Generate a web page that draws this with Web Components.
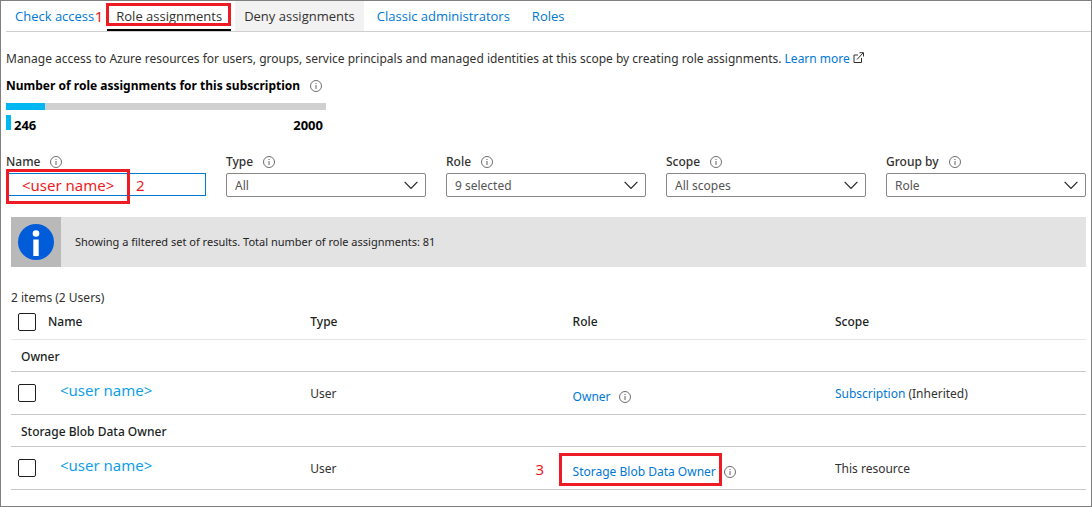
<!DOCTYPE html>
<html lang="en">
<head>
<meta charset="utf-8">
<title>Role assignments</title>
<style>
  html { height: 100%; }
  body {
    margin: 0;
    min-height: 100%;
    display: flex;
    background: #fff;
    color: #323130;
    font: 12px/20px "Noto Sans", "Open Sans", sans-serif;
  }
</style>
</head>
<body>
<access-page></access-page>

<script>
const define = (name, html, setup) => {
  const template = document.createElement('template');
  template.innerHTML = html;
  customElements.define(name, class extends HTMLElement {
    connectedCallback() {
      if (this.shadowRoot) return;
      this.attachShadow({ mode: 'open' }).append(template.content.cloneNode(true));
      if (setup) setup(this, this.shadowRoot);
    }
  });
};

define('info-icon', `
  <style>
    :host { display: inline-flex; width: 12px; height: 12px; flex: none; }
    svg { display: block; }
  </style>
  <svg width="12" height="12" viewBox="0 0 12 12" fill="none" stroke="#605e5c" aria-hidden="true">
    <circle cx="6" cy="6" r="5.5" stroke-width="0.9"/>
    <path d="M6 5v4M6 3v1" stroke-width="1"/>
  </svg>`);

/* Red frame drawn over its positioned parent */
define('mark-frame', `
  <style>
    :host { position: absolute; box-sizing: border-box; border: 3px solid #ed1c24; pointer-events: none; }
  </style>`);

/* Red step number */
define('mark-step', `
  <style>
    :host { position: absolute; color: #ed1c24; font: 15px/20px "Noto Sans", "Open Sans", sans-serif; pointer-events: none; }
  </style>
  <slot></slot>`);

define('nav-tab', `
  <style>
    :host { display: block; position: relative; }
    button {
      height: 30px; margin: 0; padding: 0 9px; border: 0; background: none;
      font: inherit; color: #0078d4; cursor: pointer; display: block; white-space: nowrap;
    }
    :host([hovered]) button { background: #f2f2f2; color: #323130; }
    :host([selected]) button { color: #323130; }
    :host([selected])::after {
      content: ""; position: absolute; left: 0; right: 0; bottom: 0; height: 2px; background: #000;
    }
    mark-frame { inset: 2px 0 5px -1px; }
    mark-step { right: 0; top: 5px; }
  </style>
  <button type="button" role="tab"><slot></slot></button>`, (host, root) => {
    root.querySelector('button').setAttribute('aria-selected', host.hasAttribute('selected'));
    if (host.hasAttribute('framed')) root.append(document.createElement('mark-frame'));
    if (host.hasAttribute('step')) {
      const step = document.createElement('mark-step');
      step.textContent = host.getAttribute('step');
      root.append(step);
    }
  });

define('tab-bar', `
  <style>
    :host { display: flex; gap: 4px; margin-left: 5px; border-bottom: 1px solid #cfcfcf; font-family: "Open Sans", "Noto Sans", sans-serif; font-size: 13px; }
  </style>
  <slot></slot>`, host => host.setAttribute('role', 'tablist'));

define('quota-meter', `
  <style>
    :host { display: block; font-weight: 700; color: #000; }
    h2 { display: flex; align-items: center; gap: 10px; margin: 0; font: inherit; white-space: nowrap; }
    .meter { width: 320px; margin-top: 7px; }
    .track { height: 7px; background: #d0d0d0; }
    .fill { width: 39px; height: 7px; background: #00b7f1; }
    .values { display: flex; justify-content: space-between; margin-top: 5px; padding-right: 3px; font-size: 13px; }
    .used { display: flex; gap: 3px; }
    .used::before { content: ""; width: 5px; height: 15px; background: #00b7f1; }
  </style>
  <h2><slot></slot><info-icon></info-icon></h2>
  <div class="meter">
    <div class="track"><div class="fill"></div></div>
    <div class="values"><span class="used">246</span><span>2000</span></div>
  </div>`);

define('filter-field', `
  <style>
    :host { display: block; min-width: 0; }
    .head { display: flex; align-items: center; gap: 10px; height: 20px; margin-bottom: 1px; }
    label { font-weight: 500; color: #323130; }
    .box { position: relative; }
    select, input {
      display: block; box-sizing: border-box; width: 100%; height: 24px; margin: 0;
      font: inherit; background: #fff; outline: none;
    }
    select { appearance: none; padding: 1px 30px 0 8px; border: 1px solid #8a8886; border-radius: 2px; color: #555; }
    input { height: 23px; padding: 0 15px; border: 1px solid #0078d4; border-radius: 0; color: #ed1c24; font-size: 15px; }
    svg { position: absolute; right: 8px; top: 8px; pointer-events: none; }
    mark-frame { left: 0; top: -4px; width: 124px; height: 35px; }
    mark-step { left: 130px; top: 2px; }
  </style>
  <div class="head"><label for="f"></label><info-icon></info-icon></div>
  <div class="box"></div>`, (host, root) => {
    root.querySelector('label').textContent = host.getAttribute('label');
    const box = root.querySelector('.box');
    const value = host.getAttribute('value');
    if (host.hasAttribute('text')) {
      box.innerHTML = '<input id="f" type="text"><mark-frame></mark-frame><mark-step>2</mark-step>';
      box.firstChild.value = value;
    } else {
      box.innerHTML = '<select id="f"><option></option></select>' +
        '<svg width="14" height="9" viewBox="0 0 14 9" fill="none" stroke="#222" stroke-width="1.2" aria-hidden="true"><path d="M.6.9 7 7.3 13.4.9"/></svg>';
      box.querySelector('option').textContent = value;
    }
  });

define('info-banner', `
  <style>
    :host { display: flex; align-items: center; gap: 14px; background: #e3e3e3; color: #252423; font-size: 11px; }
    .icon { display: flex; align-items: center; justify-content: center; width: 50px; height: 50px; background: #b9b9b9; flex: none; }
  </style>
  <span class="icon">
    <svg width="36" height="36" viewBox="0 0 36 36" aria-hidden="true">
      <circle cx="18" cy="18" r="18" fill="#015cda"/>
      <circle cx="18" cy="9.5" r="3.3" fill="#fff"/>
      <path d="M15.3 15.5h5.4V32h-5.4z" fill="#fff"/>
    </svg>
  </span>
  <span><slot></slot></span>`);

define('assignment-table', `
  <style>
    :host { display: block; }
    table { width: 100%; table-layout: fixed; border-collapse: separate; border-spacing: 0; }
    caption { text-align: left; height: 20px; }
    .check { width: 37px; }
    .col { width: 24.4%; }
    th { font-weight: 500; text-align: left; color: #201f1e; }
    th, td { padding: 0; box-sizing: border-box; border-bottom: 1px solid #c8c8c8; vertical-align: middle; white-space: nowrap; }
    thead th { height: 32px; padding-bottom: 4px; border-color: #e6e6e6; }
    tr.group th { height: 32px; padding: 2px 0 0 10px; }
    tr.item td { height: 43px; }
    tr.item td + td { padding-top: 1px; }
    tr.item td.name { vertical-align: top; padding: 8px 0 0 12px; }
    .name a { color: #0f9fe8; font-size: 15px; line-height: 20px; }
    .role { position: relative; display: inline-flex; align-items: center; gap: 8px; padding-top: 6px; }
    a { color: #0078d4; text-decoration: none; }
    input {
      appearance: none; display: block; box-sizing: border-box; width: 18px; height: 18px;
      margin: 0 0 0 7px; border: 1px solid #201f1e; border-radius: 2px; background: #fff;
    }
    mark-frame { left: -14px; top: -3px; width: 163px; height: 33px; }
    mark-step { left: -37px; top: 3px; }
  </style>
  <table>
    <caption>2 items (2 Users)</caption>
    <colgroup><col class="check"><col class="col"><col class="col"><col class="col"><col></colgroup>
    <thead>
      <tr><th><input type="checkbox" aria-label="Select all"></th><th scope="col">Name</th><th scope="col">Type</th><th scope="col">Role</th><th scope="col">Scope</th></tr>
    </thead>
    <tbody>
      <tr class="group"><th colspan="5" scope="rowgroup">Owner</th></tr>
      <tr class="item">
        <td><input type="checkbox" aria-label="Select owner"></td>
        <td class="name"><a href="#">&lt;user name&gt;</a></td>
        <td>User</td>
        <td><span class="role"><a href="#">Owner</a><info-icon></info-icon></span></td>
        <td><a href="#">Subscription</a> (Inherited)</td>
      </tr>
    </tbody>
    <tbody>
      <tr class="group"><th colspan="5" scope="rowgroup">Storage Blob Data Owner</th></tr>
      <tr class="item">
        <td><input type="checkbox" aria-label="Select storage blob data owner"></td>
        <td class="name"><a href="#">&lt;user name&gt;</a></td>
        <td>User</td>
        <td><span class="role"><a href="#">Storage Blob Data Owner</a><info-icon></info-icon><mark-frame></mark-frame><mark-step>3</mark-step></span></td>
        <td>This resource</td>
      </tr>
    </tbody>
  </table>`);

define('access-page', `
  <style>
    :host { display: block; flex: 1; min-width: 0; box-sizing: border-box; border: 1px solid #7f7f7f; }
    main { padding: 17px 5px 16px; }
    p { margin: 0 0 7px; white-space: nowrap; }
    p a { color: #0078d4; text-decoration: none; }
    .filters { display: grid; grid-template-columns: repeat(5, 1fr); gap: 20px; margin: 17px 0 20px; }
    info-banner { margin-left: 5px; }
    assignment-table { margin: 21px 0 0 5px; }
  </style>
  <tab-bar>
    <nav-tab step="1">Check access</nav-tab>
    <nav-tab selected framed>Role assignments</nav-tab>
    <nav-tab hovered>Deny assignments</nav-tab>
    <nav-tab>Classic administrators</nav-tab>
    <nav-tab>Roles</nav-tab>
  </tab-bar>
  <main>
    <p>Manage access to Azure resources for users, groups, service principals and managed identities at this scope by creating role assignments. <a href="#">Learn more <svg width="11" height="11" viewBox="0 0 11 11" fill="none" stroke="#323130" aria-hidden="true"><path d="M5 3H1v7.500h7.500V6M4 7.500 10 1M6.500.7h4V4.500"/></svg></a></p>
    <quota-meter>Number of role assignments for this subscription</quota-meter>
    <div class="filters">
      <filter-field text label="Name" value="&lt;user name&gt;"></filter-field>
      <filter-field label="Type" value="All"></filter-field>
      <filter-field label="Role" value="9 selected"></filter-field>
      <filter-field label="Scope" value="All scopes"></filter-field>
      <filter-field label="Group by" value="Role"></filter-field>
    </div>
    <info-banner>Showing a filtered set of results. Total number of role assignments: 81</info-banner>
    <assignment-table></assignment-table>
  </main>`);
</script>
</body>
</html>
